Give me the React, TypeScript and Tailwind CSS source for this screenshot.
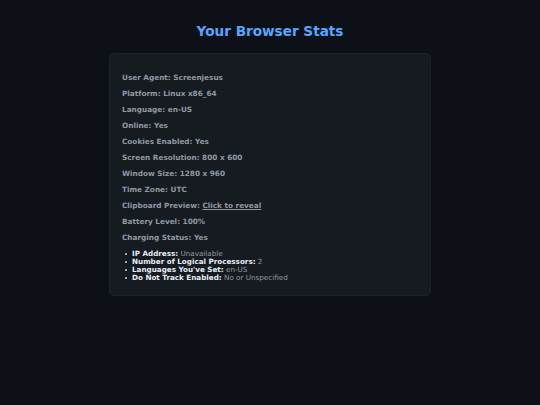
import React from "react";

const rows: [string, React.ReactNode][] = [
  ["User Agent", "Screenjesus"],
  ["Platform", "Linux x86_64"],
  ["Language", "en-US"],
  ["Online", "Yes"],
  ["Cookies Enabled", "Yes"],
  ["Screen Resolution", "800 x 600"],
  ["Window Size", "1280 x 960"],
  ["Time Zone", "UTC"],
  ["Clipboard Preview", <span className="underline cursor-pointer">Click to reveal</span>],
  ["Battery Level", "100%"],
  ["Charging Status", "Yes"],
];

const extras: [string, string][] = [
  ["IP Address", "Unavailable"],
  ["Number of Logical Processors", "2"],
  ["Languages You've Set", "en-US"],
  ["Do Not Track Enabled", "No or Unspecified"],
];

export default function App() {
  return (
    <div
      className="min-h-[405px] w-full bg-[#0d1117] text-[#8f98a2]"
      style={{ fontFamily: '"DejaVu Sans", sans-serif' }}
    >
      <div className="flex flex-col items-center pt-[22px]">
        <h1 className="text-[13.6px] leading-[18px] font-bold text-[#58a6ff]">Your Browser Stats</h1>
        <div className="mt-[13px] w-[322px] rounded-[5px] border border-[#1c232d] bg-[#161b22] px-[12px] pt-[12px] pb-[13px]">
          {rows.map(([k, v]) => (
            <p key={k} className="my-[7.5px] text-[7.3px] leading-[8.5px] font-bold">
              {k}: {v}
            </p>
          ))}
          <ul className="mt-[7.5px] text-[7.2px] leading-[8px]">
            {extras.map(([k, v]) => (
              <li key={k} className="flex items-center">
                <span className="ml-[3px] mr-[5px] h-[2px] w-[2px] shrink-0 rounded-full bg-[#c9d1d9]" />
                <span className="whitespace-pre">
                  <span className="font-bold text-[#e6edf3]">{k}:</span> {v}
                </span>
              </li>
            ))}
          </ul>
        </div>
      </div>
    </div>
  );
}
